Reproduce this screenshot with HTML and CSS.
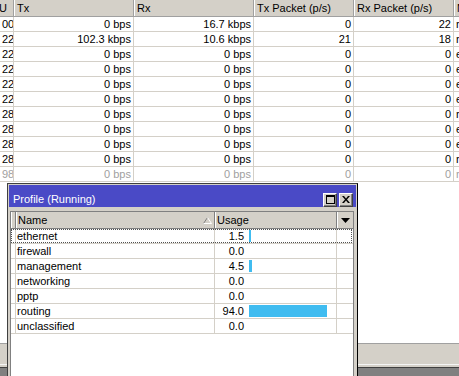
FILE: index.html
```html
<!DOCTYPE html>
<html lang="en">

<head>
    <meta charset="UTF-8">
    <meta name="viewport" content="width=device-width, initial-scale=1.0">
    <title>Profile (Running)</title>
    <link rel="stylesheet" href="styles.css">
</head>

<body>
    <div class="screen">
        <div class="table">
            <div class="row head">
                <div class="cell first">U</div>
                <div class="cell">Tx</div>
                <div class="cell">Rx</div>
                <div class="cell">Tx Packet (p/s)</div>
                <div class="cell">Rx Packet (p/s)</div>
                <div class="cell">Name</div>
            </div>
            <div class="row">
                <div class="cell num">00</div><div class="cell num">0 bps</div><div class="cell num">16.7 kbps</div>
                <div class="cell num">0</div><div class="cell num">22</div><div class="cell">roadwarrior</div>
            </div>
            <div class="row">
                <div class="cell num">22</div><div class="cell num">102.3 kbps</div><div class="cell num">10.6 kbps</div>
                <div class="cell num">21</div><div class="cell num">18</div><div class="cell">router</div>
            </div>
            <div class="row">
                <div class="cell num">22</div><div class="cell num">0 bps</div><div class="cell num">0 bps</div>
                <div class="cell num">0</div><div class="cell num">0</div><div class="cell">ether2</div>
            </div>
            <div class="row">
                <div class="cell num">22</div><div class="cell num">0 bps</div><div class="cell num">0 bps</div>
                <div class="cell num">0</div><div class="cell num">0</div><div class="cell">ether3</div>
            </div>
            <div class="row">
                <div class="cell num">22</div><div class="cell num">0 bps</div><div class="cell num">0 bps</div>
                <div class="cell num">0</div><div class="cell num">0</div><div class="cell">ether4</div>
            </div>
            <div class="row">
                <div class="cell num">22</div><div class="cell num">0 bps</div><div class="cell num">0 bps</div>
                <div class="cell num">0</div><div class="cell num">0</div><div class="cell">ether5</div>
            </div>
            <div class="row">
                <div class="cell num">28</div><div class="cell num">0 bps</div><div class="cell num">0 bps</div>
                <div class="cell num">0</div><div class="cell num">0</div><div class="cell">rnd</div>
            </div>
            <div class="row">
                <div class="cell num">28</div><div class="cell num">0 bps</div><div class="cell num">0 bps</div>
                <div class="cell num">0</div><div class="cell num">0</div><div class="cell">eoip1</div>
            </div>
            <div class="row">
                <div class="cell num">28</div><div class="cell num">0 bps</div><div class="cell num">0 bps</div>
                <div class="cell num">0</div><div class="cell num">0</div><div class="cell">eoip2</div>
            </div>
            <div class="row">
                <div class="cell num">28</div><div class="cell num">0 bps</div><div class="cell num">0 bps</div>
                <div class="cell num">0</div><div class="cell num">0</div><div class="cell">remote</div>
            </div>
            <div class="row disabled">
                <div class="cell num">98</div><div class="cell num">0 bps</div><div class="cell num">0 bps</div>
                <div class="cell num">0</div><div class="cell num">0</div><div class="cell">radio</div>
            </div>
        </div>

        <div class="status">
            <div class="status-face"></div>
            <div class="status-edge"></div>
            <div class="status-dark"></div>
        </div>

        <div class="window">
            <div class="titlebar">
                <span class="title">Profile (Running)</span>
                <div class="buttons">
                    <div class="tbtn">
                        <svg width="9" height="9" viewBox="0 0 9 9">
                            <rect x="0.5" y="0.5" width="8" height="8" fill="none" stroke="#000" />
                            <rect x="0" y="0" width="9" height="2" fill="#000" />
                        </svg>
                    </div>
                    <div class="tbtn">
                        <svg width="8" height="7" viewBox="0 0 8 7">
                            <path d="M0 0h2l2 2.5L6 0h2L5 3.5 8 7H6L4 4.5 2 7H0l3-3.5z" fill="#000" />
                        </svg>
                    </div>
                </div>
            </div>

            <div class="list">
                <div class="lrow lhead">
                    <div class="lcell"></div>
                    <div class="lcell sorted">
                        <span>Name</span>
                        <svg width="9" height="7" viewBox="0 0 9 7">
                            <path d="M0.5 6.5L4.5 0.5" stroke="#808080" fill="none" />
                            <path d="M4.5 0.5L8.5 6.5H0.5" stroke="#fff" fill="none" />
                        </svg>
                    </div>
                    <div class="lcell">Usage</div>
                    <div class="lcell menu">
                        <svg width="9" height="5" viewBox="0 0 9 5">
                            <path d="M0 0h9L4.5 5z" fill="#000" />
                        </svg>
                    </div>
                </div>
                <div class="lrow focused">
                    <div class="lcell"></div><div class="lcell">ethernet</div>
                    <div class="lcell usage"><span class="val">1.5</span><span class="bar" style="width: 2px"></span></div>
                    <div class="lcell"></div>
                </div>
                <div class="lrow">
                    <div class="lcell"></div><div class="lcell">firewall</div>
                    <div class="lcell usage"><span class="val">0.0</span></div>
                    <div class="lcell"></div>
                </div>
                <div class="lrow">
                    <div class="lcell"></div><div class="lcell">management</div>
                    <div class="lcell usage"><span class="val">4.5</span><span class="bar" style="width: 3px"></span></div>
                    <div class="lcell"></div>
                </div>
                <div class="lrow">
                    <div class="lcell"></div><div class="lcell">networking</div>
                    <div class="lcell usage"><span class="val">0.0</span></div>
                    <div class="lcell"></div>
                </div>
                <div class="lrow">
                    <div class="lcell"></div><div class="lcell">pptp</div>
                    <div class="lcell usage"><span class="val">0.0</span></div>
                    <div class="lcell"></div>
                </div>
                <div class="lrow">
                    <div class="lcell"></div><div class="lcell">routing</div>
                    <div class="lcell usage"><span class="val">94.0</span><span class="bar" style="width: 78px"></span></div>
                    <div class="lcell"></div>
                </div>
                <div class="lrow">
                    <div class="lcell"></div><div class="lcell">unclassified</div>
                    <div class="lcell usage"><span class="val">0.0</span></div>
                    <div class="lcell"></div>
                </div>
            </div>
        </div>
    </div>
</body>

</html>
```

FILE: styles.css
```css
body {
    margin: 0;
    padding: 0;
    font-family: "Liberation Sans", Arial, sans-serif;
    font-size: 11px;
    color: #000;
    background-color: #fff;
}

.screen {
    position: relative;
    width: 459px;
    height: 376px;
    overflow: hidden;
    display: flex;
    flex-direction: column;
}

/* background interface table */

.table {
    flex: 1;
    background-color: #fff;
}

.row {
    display: grid;
    grid-template-columns: 14px 120px 120px 100px 100px 1fr;
    height: 15px;
    line-height: 14px;
    border-bottom: 1px solid #d4d0c8;
    box-sizing: border-box;
}

.row.head {
    height: 17px;
    line-height: 16px;
    background-color: #d4d0c8;
    border-bottom: 1px solid #a0a0a0;
}

.cell {
    border-right: 1px solid #d4d0c8;
    padding: 0 2px;
    white-space: nowrap;
    overflow: hidden;
}

.cell:last-child {
    border-right: none;
}

.head .cell {
    padding: 0 3px;
    border-right: 1px solid #a0a0a0;
    box-shadow: inset 1px 0 0 #fff;
}

.head .cell.first {
    padding: 0;
    text-indent: -1px;
    box-shadow: none;
}

.num {
    text-align: right;
}

.disabled {
    color: #a0a0a0;
}

.status {
    height: 33px;
    display: flex;
    flex-direction: column;
}

.status-face {
    height: 20px;
    background-color: #d4d0c8;
    border-top: 1px solid #a0a0a0;
}

.status-edge {
    height: 2px;
    background-color: #d4d0c8;
    border-top: 1px solid #f4f4f4;
}

.status-dark {
    flex: 1;
    background-color: #808080;
    border-top: 1px solid #404040;
}

/* profile window */

.window {
    position: absolute;
    left: 7px;
    top: 183px;
    width: 351px;
    height: 200px;
    box-sizing: border-box;
    padding: 1px;
    background-color: #d4d0c8;
    border: 1px solid;
    border-color: #404040 #000 #000 #404040;
    display: flex;
    flex-direction: column;
}

.titlebar {
    height: 22px;
    background-color: #4a4ac6;
    color: #fff;
    display: flex;
    align-items: center;
    justify-content: space-between;
    padding: 0 3px 0 4px;
}

.title {
    padding-top: 5px;
}

.buttons {
    display: flex;
    gap: 2px;
    padding-top: 7px;
}

.tbtn {
    width: 14px;
    height: 14px;
    box-sizing: border-box;
    background-color: #d4d0c8;
    border: 1px solid;
    border-color: #fff #404040 #404040 #fff;
    box-shadow: inset -1px -1px 0 #808080;
    display: flex;
    align-items: center;
    justify-content: center;
}

.list {
    flex: 1;
    margin: 4px 2px 0 1px;
    background-color: #fff;
    border: 1px solid #808080;
}

.lrow {
    position: relative;
    display: grid;
    grid-template-columns: 5px 199px 122px 1fr;
    height: 15px;
    line-height: 14px;
    border-bottom: 1px solid #d4d0c8;
    box-sizing: border-box;
}

.lrow.lhead {
    height: 17px;
    line-height: 16px;
    background-color: #d4d0c8;
    border-bottom: 1px solid #808080;
}

.lcell {
    border-right: 1px solid #d4d0c8;
    padding: 0 1px;
    white-space: nowrap;
    overflow: hidden;
}

.lcell:last-child {
    border-right: none;
}

.lhead .lcell {
    border-right: 1px solid #808080;
    box-shadow: inset 1px 0 0 #fff;
    padding: 0 2px;
}

.lhead .lcell:first-child {
    padding: 0;
}

.lhead .lcell:last-child {
    border-right: none;
}

.sorted {
    display: flex;
    align-items: center;
    justify-content: space-between;
}

.menu {
    display: flex;
    justify-content: center;
    align-items: center;
    padding-top: 1px !important;
}

.usage {
    display: flex;
    align-items: center;
    padding: 0;
}

.val {
    width: 29px;
    text-align: right;
}

.bar {
    height: 12px;
    margin-left: 5px;
    background-color: #40bcf0;
}

.focused::after {
    content: "";
    position: absolute;
    left: 0;
    right: 1px;
    top: 0;
    bottom: 0;
    border: 1px dotted #505050;
}
```
